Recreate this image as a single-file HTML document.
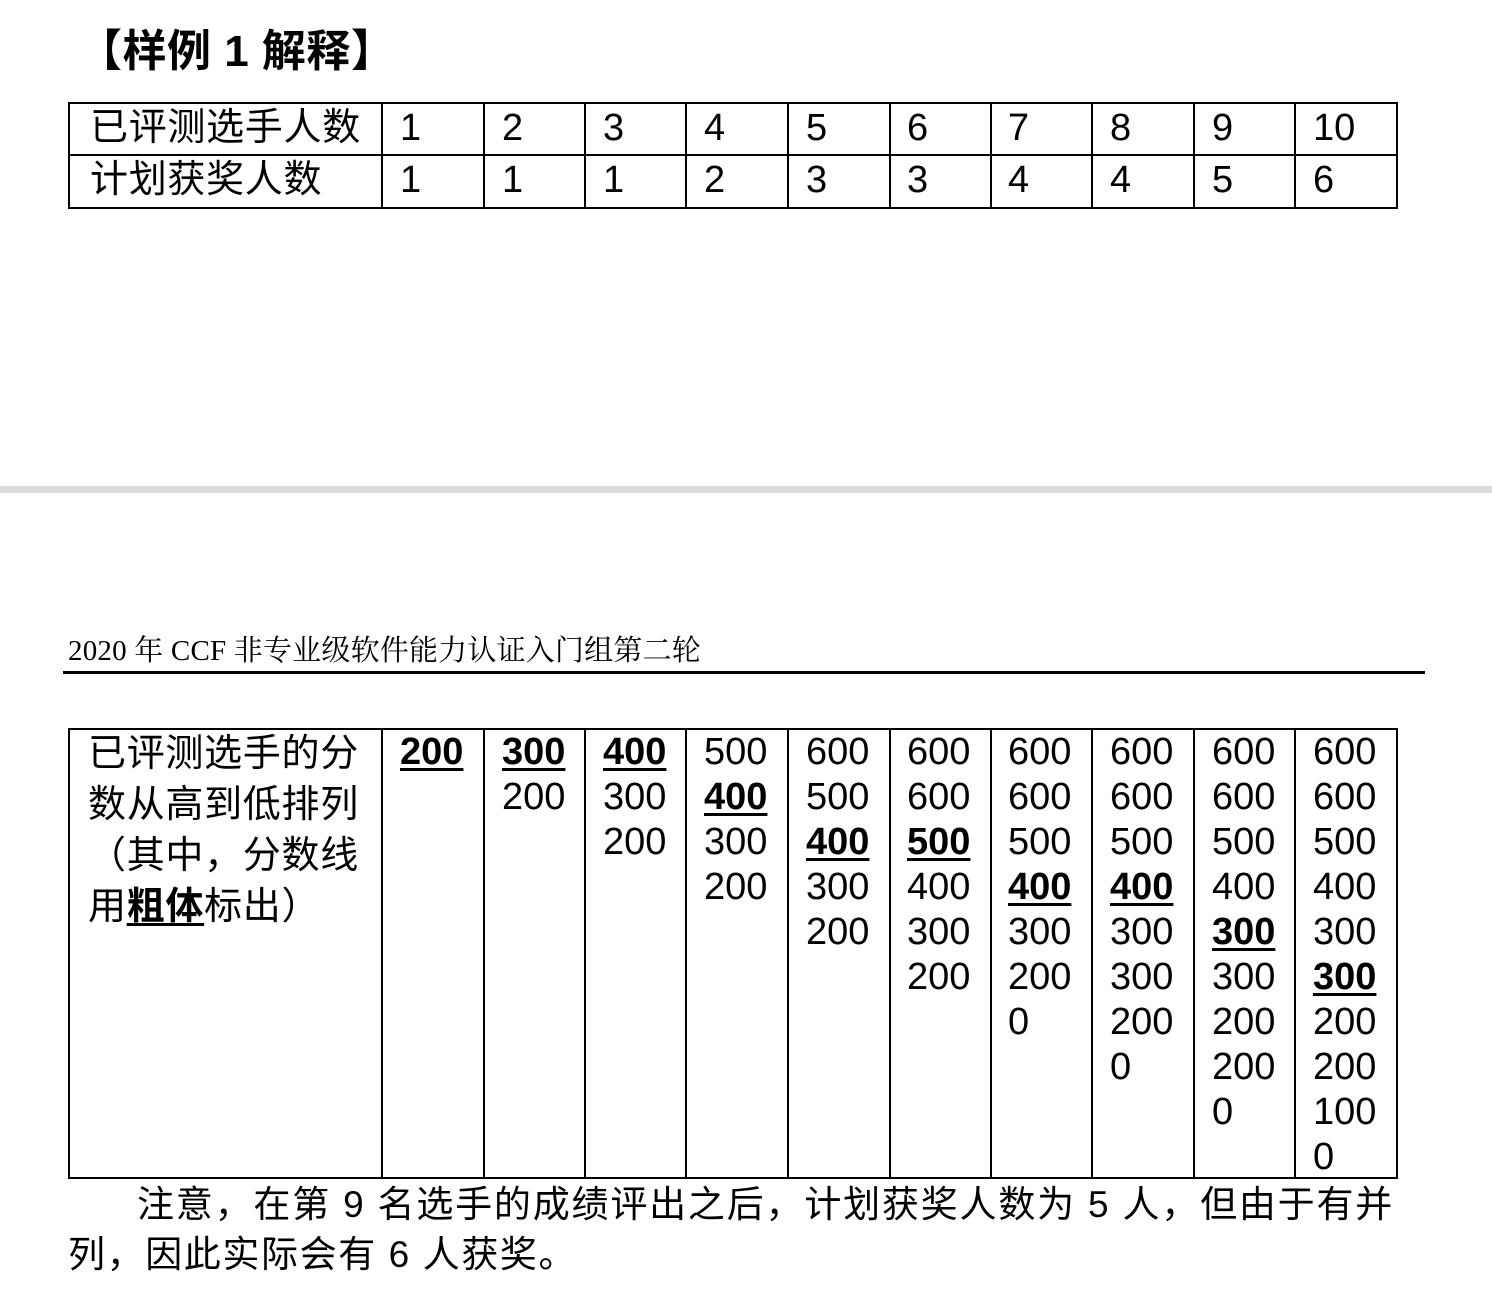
<!DOCTYPE html>
<html><head><meta charset="utf-8"><style>
body{margin:0;width:1492px;height:1307px;background:#fff;position:relative;overflow:hidden;font-family:"Liberation Sans","Noto Sans CJK SC",sans-serif;color:#000}
.a{position:absolute;white-space:nowrap}
.h{left:78px;top:24px;font-size:44px;font-weight:bold;line-height:56px;letter-spacing:0.5px}
.v{position:absolute;width:2px;background:#000}
.hl{position:absolute;height:2px;background:#000}
.c{position:absolute;font-size:38px;line-height:52px;white-space:nowrap}
.n{position:absolute;font-size:38px;line-height:45px}
b{text-decoration:underline;text-decoration-thickness:3px;text-underline-offset:4px}
</style></head><body>
<div class="a h">【样例 1 解释】</div>

<div class="hl" style="left:68px;top:102px;width:1330px"></div>
<div class="hl" style="left:68px;top:154px;width:1330px"></div>
<div class="hl" style="left:68px;top:207px;width:1330px"></div>
<div class="v" style="left:68px;top:102px;height:107px"></div>
<div class="v" style="left:381px;top:102px;height:107px"></div>
<div class="v" style="left:483px;top:102px;height:107px"></div>
<div class="v" style="left:584px;top:102px;height:107px"></div>
<div class="v" style="left:685px;top:102px;height:107px"></div>
<div class="v" style="left:787px;top:102px;height:107px"></div>
<div class="v" style="left:889px;top:102px;height:107px"></div>
<div class="v" style="left:990px;top:102px;height:107px"></div>
<div class="v" style="left:1091px;top:102px;height:107px"></div>
<div class="v" style="left:1193px;top:102px;height:107px"></div>
<div class="v" style="left:1294px;top:102px;height:107px"></div>
<div class="v" style="left:1396px;top:102px;height:107px"></div>
<div class="c" style="left:90px;top:102px;letter-spacing:0.7px">已评测选手人数</div>
<div class="c" style="left:90px;top:154px;letter-spacing:0.7px">计划获奖人数</div>
<div class="c" style="left:400px;top:102px">1</div><div class="c" style="left:400px;top:154px">1</div>
<div class="c" style="left:502px;top:102px">2</div><div class="c" style="left:502px;top:154px">1</div>
<div class="c" style="left:603px;top:102px">3</div><div class="c" style="left:603px;top:154px">1</div>
<div class="c" style="left:704px;top:102px">4</div><div class="c" style="left:704px;top:154px">2</div>
<div class="c" style="left:806px;top:102px">5</div><div class="c" style="left:806px;top:154px">3</div>
<div class="c" style="left:907px;top:102px">6</div><div class="c" style="left:907px;top:154px">3</div>
<div class="c" style="left:1008px;top:102px">7</div><div class="c" style="left:1008px;top:154px">4</div>
<div class="c" style="left:1110px;top:102px">8</div><div class="c" style="left:1110px;top:154px">4</div>
<div class="c" style="left:1212px;top:102px">9</div><div class="c" style="left:1212px;top:154px">5</div>
<div class="c" style="left:1313px;top:102px">10</div><div class="c" style="left:1313px;top:154px">6</div>

<div style="position:absolute;left:0;top:486px;width:1492px;height:7px;background:#dcdcdc"></div>

<div class="a" style="left:68px;top:633px;font-family:'Liberation Serif','Noto Serif CJK SC',serif;font-size:29px;line-height:36px;letter-spacing:0.2px">2020 年 CCF 非专业级软件能力认证入门组第二轮</div>
<div style="position:absolute;left:63px;top:671px;width:1362px;height:3px;background:#000"></div>

<div class="hl" style="left:68px;top:728px;width:1330px"></div>
<div class="hl" style="left:68px;top:1177px;width:1330px"></div>
<div class="v" style="left:68px;top:728px;height:451px"></div>
<div class="v" style="left:381px;top:728px;height:451px"></div>
<div class="v" style="left:483px;top:728px;height:451px"></div>
<div class="v" style="left:584px;top:728px;height:451px"></div>
<div class="v" style="left:685px;top:728px;height:451px"></div>
<div class="v" style="left:787px;top:728px;height:451px"></div>
<div class="v" style="left:889px;top:728px;height:451px"></div>
<div class="v" style="left:990px;top:728px;height:451px"></div>
<div class="v" style="left:1091px;top:728px;height:451px"></div>
<div class="v" style="left:1193px;top:728px;height:451px"></div>
<div class="v" style="left:1294px;top:728px;height:451px"></div>
<div class="v" style="left:1396px;top:728px;height:451px"></div>
<div class="c" style="left:88px;top:729px;line-height:51px;font-size:38px;letter-spacing:0.7px">已评测选手的分<br>数从高到低排列<br>（其中，分数线<br>用<b style="font-weight:bold">粗体</b>标出）</div>
<div class="n" style="left:400px;top:730px"><b>200</b></div>
<div class="n" style="left:502px;top:730px"><b>300</b><br>200</div>
<div class="n" style="left:603px;top:730px"><b>400</b><br>300<br>200</div>
<div class="n" style="left:704px;top:730px">500<br><b>400</b><br>300<br>200</div>
<div class="n" style="left:806px;top:730px">600<br>500<br><b>400</b><br>300<br>200</div>
<div class="n" style="left:907px;top:730px">600<br>600<br><b>500</b><br>400<br>300<br>200</div>
<div class="n" style="left:1008px;top:730px">600<br>600<br>500<br><b>400</b><br>300<br>200<br>0</div>
<div class="n" style="left:1110px;top:730px">600<br>600<br>500<br><b>400</b><br>300<br>300<br>200<br>0</div>
<div class="n" style="left:1212px;top:730px">600<br>600<br>500<br>400<br><b>300</b><br>300<br>200<br>200<br>0</div>
<div class="n" style="left:1313px;top:730px">600<br>600<br>500<br>400<br>300<br><b>300</b><br>200<br>200<br>100<br>0</div>

<div class="a" style="left:137px;top:1180px;font-size:37px;line-height:50px;letter-spacing:1.8px">注意，在第 9 名选手的成绩评出之后，计划获奖人数为 5 人，但由于有并</div>
<div class="a" style="left:68px;top:1230px;font-size:37px;line-height:50px;letter-spacing:1.6px">列，因此实际会有 6 人获奖。</div>
</body></html>
